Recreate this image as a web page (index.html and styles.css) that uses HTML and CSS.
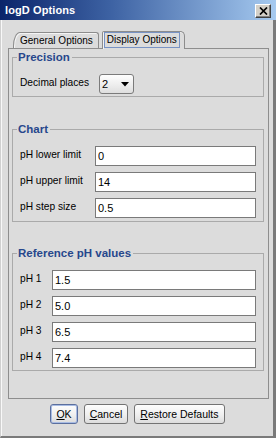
FILE: index.html
```html
<!DOCTYPE html>
<html>
<head>
<meta charset="utf-8">
<title>logD Options</title>
<link rel="stylesheet" href="styles.css">
</head>
<body>
<div class="window">
  <div class="titlebar">
    <span class="title">logD Options</span>
    <span class="close"><svg width="9" height="8" viewBox="0 0 9 8"><path d="M1 0.5 L8 7.5 M8 0.5 L1 7.5" stroke="#000" stroke-width="1.7" fill="none"/></svg></span>
  </div>
  <div class="frame">
    <div class="tabs">
      <div class="tab">General Options</div>
      <div class="tab active"><span class="focus">Display Options</span></div>
    </div>
    <div class="panel">
      <fieldset class="group">
        <legend>Precision</legend>
        <div class="rows rows-precision">
          <span class="label">Decimal places</span>
          <div class="combo"><span>2</span><svg width="8" height="5" viewBox="0 0 8 5"><path d="M0 0 H8 L4 4.5 Z" fill="#000"/></svg></div>
        </div>
      </fieldset>
      <fieldset class="group group-chart">
        <legend>Chart</legend>
        <div class="rows rows-chart">
          <span class="label">pH lower limit</span>
          <input class="field" type="text" value="0">
          <span class="label">pH upper limit</span>
          <input class="field" type="text" value="14">
          <span class="label">pH step size</span>
          <input class="field" type="text" value="0.5">
        </div>
      </fieldset>
      <fieldset class="group group-ref">
        <legend>Reference pH values</legend>
        <div class="rows rows-ref">
          <span class="label">pH 1</span>
          <input class="field" type="text" value="1.5">
          <span class="label">pH 2</span>
          <input class="field" type="text" value="5.0">
          <span class="label">pH 3</span>
          <input class="field" type="text" value="6.5">
          <span class="label">pH 4</span>
          <input class="field" type="text" value="7.4">
        </div>
      </fieldset>
    </div>
    <div class="buttons">
      <button class="btn btn-default"><u>O</u>K</button>
      <button class="btn"><u>C</u>ancel</button>
      <button class="btn"><u>R</u>estore Defaults</button>
    </div>
  </div>
</div>
</body>
</html>
```
FILE: styles.css
```css
* { box-sizing: border-box; }
html, body { margin: 0; padding: 0; }
body {
  width: 276px;
  height: 438px;
  overflow: hidden;
  background: #dcdcdc;
  font-family: "Liberation Sans", Arial, sans-serif;
  font-size: 10.2px;
  color: #000;
}
.window {
  display: flex;
  flex-direction: column;
  height: 438px;
}
.titlebar {
  flex: none;
  height: 20px;
  display: flex;
  align-items: center;
  justify-content: space-between;
  padding: 0 5px 0 5px;
  background: linear-gradient(to right, #0a246a 0%, #3d62a3 40%, #a6caf0 100%);
}
.title {
  color: #fff;
  font-weight: bold;
  font-size: 11px;
  letter-spacing: 0.1px;
}
.close {
  width: 16px;
  height: 14px;
  margin-top: 2px;
  display: flex;
  align-items: center;
  justify-content: center;
  background: #d4d0c8;
  border: 1px solid;
  border-color: #fff #404040 #404040 #fff;
  box-shadow: inset -1px -1px #808080;
}
.frame {
  flex: 1;
  display: flex;
  flex-direction: column;
  border-left: 1px solid #d0d0d0;
  border-right: 3px solid #7a7a7a;
  border-bottom: 2px solid #7a7a7a;
  box-shadow: inset 1px 0 #f8f8f8;
  padding: 11px 4px 12px 7px;
}
.tabs {
  flex: none;
  display: flex;
  align-items: flex-end;
  height: 18px;
  margin-bottom: -1px;
  padding-left: 5px;
  gap: 3px;
  position: relative;
  z-index: 1;
}
.tab {
  height: 16px;
  margin-bottom: 1px;
  padding: 0 5px 0 6px;
  display: flex;
  align-items: center;
  border: 1px solid #8c8c8c;
  border-bottom: none;
  border-radius: 7px 3px 0 0 / 14px 3px 0 0;
  background: #dcdcdc;
  box-shadow: inset 1px 1px #f4f4f4;
  white-space: nowrap;
  font-size: 10px;
}
.tab.active {
  height: 18px;
  margin-bottom: 0;
  padding: 0 4px 1px 1px;
  border-radius: 2px 5px 0 0;
}
.focus {
  border: 1px solid #7893c4;
  padding: 1px 2px 1px 2px;
  line-height: 12px;
}
.panel {
  flex: 1;
  display: flex;
  flex-direction: column;
  border: 1px solid #8e8e8e;
  padding: 1px 4px 0 3px;
}
.group {
  margin: 0;
  min-width: 0;
  border: 1px solid #aaaaaa;
  padding: 10px 7px 2px 7px;
}
.group-chart { margin-top: 25px; padding-bottom: 3px; }
.group-ref { margin-top: 24px; }
.group legend {
  margin-left: -3px;
  padding: 0 2px 0 1px;
  font-weight: bold;
  font-size: 11.5px;
  line-height: 14px;
  color: #27478c;
}
.rows {
  display: grid;
  row-gap: 6px;
  align-items: start;
}
.rows-precision { grid-template-columns: 79px 35px; }
.rows-chart { grid-template-columns: 75px 1fr; }
.rows-ref { grid-template-columns: 32px 1fr; }
.label {
  padding-top: 2px;
  line-height: 13px;
  white-space: nowrap;
}
.field {
  display: block;
  width: 100%;
  height: 20px;
  margin: 0;
  padding: 0 2px;
  border: 1px solid #7a7a7a;
  background: #fff;
  font-family: "Liberation Sans", Arial, sans-serif;
  font-size: 11px;
  color: #000;
  outline: none;
}
.combo {
  height: 20px;
  display: flex;
  align-items: center;
  justify-content: space-between;
  padding: 0 4px 0 2px;
  border: 1px solid #7b7b7b;
  border-radius: 3px;
  background: linear-gradient(#fefefe, #ececec 60%, #dedede);
  font-size: 11px;
}
.buttons {
  flex: none;
  display: flex;
  justify-content: center;
  gap: 6px;
  margin-top: 5px;
  padding-right: 2px;
}
.btn {
  height: 20px;
  margin: 0;
  padding: 0 5px;
  border: 1px solid #737373;
  border-radius: 3px;
  background: linear-gradient(#fdfdfd, #efefef 55%, #dcdcdc);
  font-family: "Liberation Sans", Arial, sans-serif;
  font-size: 10.5px;
  color: #000;
}
.btn-default {
  border-color: #5b6f9e;
  box-shadow: inset 0 0 0 1px #a8bce4;
}
```
